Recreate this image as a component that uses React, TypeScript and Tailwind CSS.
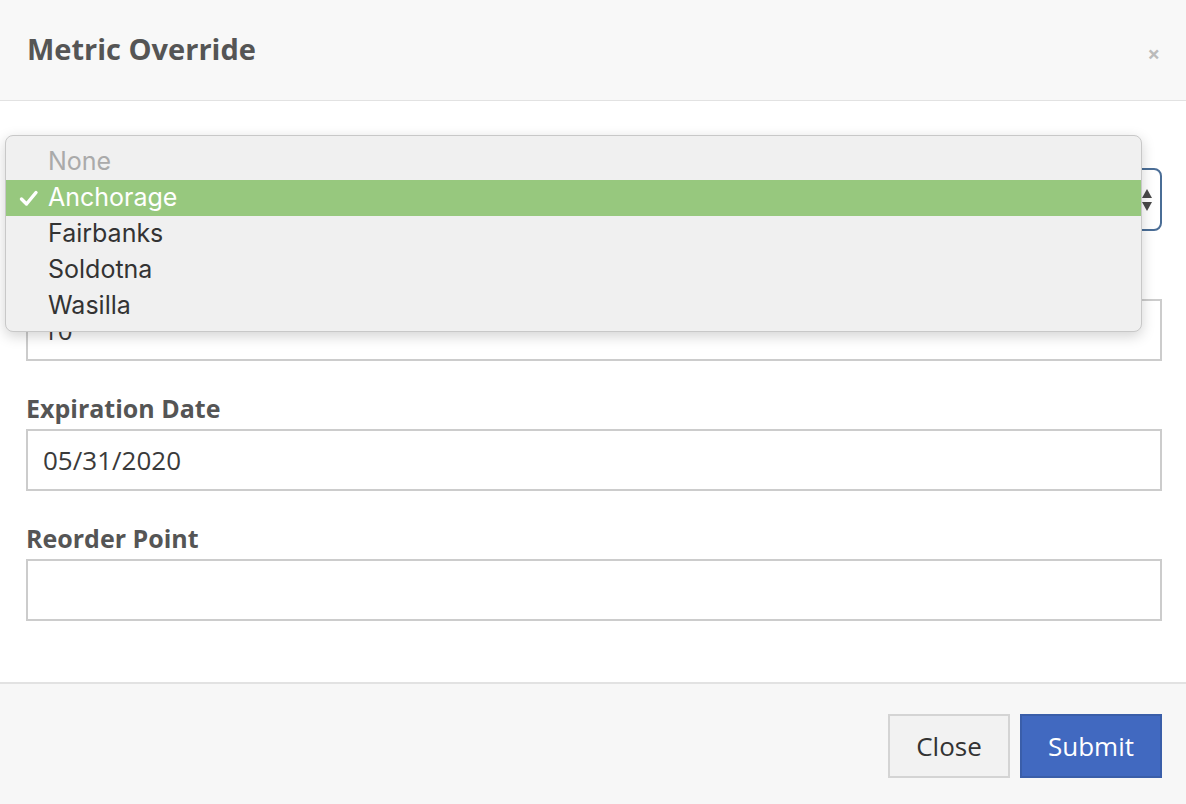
import React from "react";

const Field = ({ label, value, children, last }: { label: string; value?: string; children?: React.ReactNode; last?: boolean }) => (
  <div className={last ? "" : "mb-[33px]"}>
    <div className="text-[25px] leading-[28px] font-bold text-[#555] mb-[7px]">{label}</div>
    {children ?? (
      <div className="h-[62px] border-2 border-[#cccccc] bg-white flex items-center px-[15px] text-[26px] text-[#3a3a3a]">
        {value}
      </div>
    )}
  </div>
);

export default function App() {
  const items = ["None", "Anchorage", "Fairbanks", "Soldotna", "Wasilla"];
  return (
    <div className="relative w-[1186px] h-[804px] flex flex-col bg-white overflow-hidden" style={{ fontFamily: '"Open Sans", sans-serif' }}>
      <div className="h-[101px] shrink-0 bg-[#f8f8f8] border-b border-[#e2e2e2] flex items-center justify-between pl-[27px] pr-[26px]">
        <div className="text-[29px] font-bold text-[#555] mt-[-2px]">Metric Override</div>
        <div className="text-[22px] font-bold text-[#bbbbbb] leading-none mt-[6px]">×</div>
      </div>
      <div className="flex-1 bg-white pt-[32px] pl-[26px] pr-[24px]">
        <Field label="Location">
          <div className="h-[63px] rounded-[8px] border-2 border-[#4a6d96] bg-white flex items-center justify-end pr-[7px]">
            <svg width="12" height="26" viewBox="0 0 12 26">
              <path d="M6 2 L11 11 L1 11 Z" fill="#4a4a4a" />
              <path d="M1 15 L11 15 L6 24 Z" fill="#4a4a4a" />
            </svg>
          </div>
        </Field>
        <Field label="Override Value" value="10" />
        <Field label="Expiration Date" value="05/31/2020" />
        <Field label="Reorder Point" value="" last />
      </div>
      <div className="h-[122px] shrink-0 bg-[#f7f7f7] border-t-2 border-[#e2e2e2] flex justify-end items-start pt-[30px] pr-[24px] gap-[10px]">
        <button className="w-[122px] h-[64px] bg-[#f2f2f2] border-2 border-[#d4d4d4] text-[26px] text-[#333]">Close</button>
        <button className="w-[142px] h-[64px] bg-[#4169c0] border-2 border-[#3a5ea9] text-[26px] text-white">Submit</button>
      </div>

      <div
        className="absolute left-[5px] top-[135px] w-[1137px] h-[197px] rounded-[8px] bg-[#f0f0f0] border border-[#c8c8c8] shadow-[0_4px_14px_rgba(0,0,0,0.18)] py-[8px]"
        style={{ fontFamily: 'Inter, "Noto Sans", sans-serif' }}
      >
        {items.map((it, i) => (
          <div
            key={it}
            className={
              "h-[36px] flex items-center text-[25px] pl-[42px] relative " +
              (i === 1 ? "bg-[#97c87e] text-white" : i === 0 ? "text-[#aaaaaa]" : "text-[#333]")
            }
          >
            {i === 1 && (
              <svg className="absolute left-[13px] top-[10px]" width="20" height="17" viewBox="0 0 20 17">
                <path d="M2.5 9 L7.5 14 L17 2.5" fill="none" stroke="white" strokeWidth="3.4" strokeLinecap="round" strokeLinejoin="round" />
              </svg>
            )}
            {it}
          </div>
        ))}
      </div>
    </div>
  );
}
